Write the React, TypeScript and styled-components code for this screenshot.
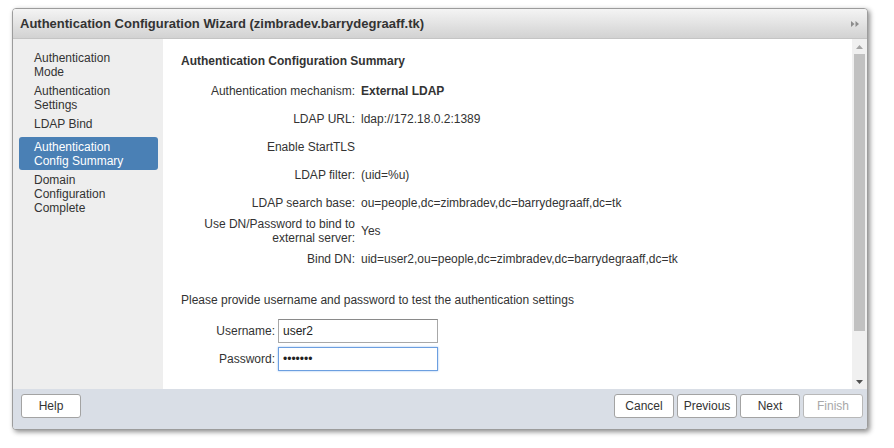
import React from 'react';
import styled, { createGlobalStyle } from 'styled-components';

const GlobalStyle = createGlobalStyle`
  html, body {
    margin: 0;
    padding: 0;
    background: #ffffff;
  }
  body {
    font-family: "Liberation Sans", Arial, sans-serif;
    font-size: 12px;
    color: #333333;
  }
`;

const Page = styled.div`
  padding: 8px 0 0 12px;
  width: 894px;
  height: 448px;
  box-sizing: border-box;
`;

const Dialog = styled.div`
  width: 856px;
  height: 422px;
  box-sizing: border-box;
  border: 1px solid #9c9c9c;
  border-radius: 4px;
  box-shadow: 2px 2px 5px rgba(0, 0, 0, 0.45);
  display: flex;
  flex-direction: column;
  overflow: hidden;
  background: #ffffff;
`;

const TitleBar = styled.div`
  height: 29px;
  flex: none;
  display: flex;
  align-items: center;
  justify-content: space-between;
  padding: 0 8px 0 7px;
  background: linear-gradient(#f4f4f4, #d2d2d2);
  border-bottom: 1px solid #c4c4c4;
`;

const Title = styled.div`
  font-size: 13px;
  font-weight: bold;
  color: #333333;
`;

const Body = styled.div`
  height: 350px;
  flex: none;
  display: flex;
`;

const Nav = styled.div`
  width: 150px;
  flex: none;
  background: #eeeeee;
  padding-top: 9px;
  box-sizing: border-box;
  display: flex;
  flex-direction: column;
`;

// text column is narrow on purpose: the wizard wraps "Authentication Mode"
const NavItem = styled.div<{ $selected?: boolean }>`
  margin: ${(p) => (p.$selected ? '4px' : '0')} 0 0 6px;
  width: 139px;
  box-sizing: border-box;
  padding: 3px 30px 2px 15px;
  line-height: 14px;
  border-radius: 3px;
  background: ${(p) => (p.$selected ? '#4a80b5' : 'transparent')};
  color: ${(p) => (p.$selected ? '#ffffff' : '#333333')};
`;

const Content = styled.div`
  flex: 1;
  padding: 15px 18px 0;
  overflow: hidden;
  box-sizing: border-box;
`;

const Heading = styled.div`
  font-weight: bold;
  line-height: 14px;
  margin-bottom: 9px;
`;

const Summary = styled.div`
  display: grid;
  grid-template-columns: 174px 1fr;
  grid-auto-rows: 28px;
  column-gap: 6px;
  align-items: center;
  line-height: 14px;
`;

const Label = styled.div`
  text-align: right;
`;

const Value = styled.div<{ $bold?: boolean }>`
  font-weight: ${(p) => (p.$bold ? 'bold' : 'normal')};
  white-space: nowrap;
`;

const Note = styled.div`
  margin-top: 20px;
  line-height: 14px;
`;

const LoginGrid = styled.div`
  margin-top: 12px;
  display: grid;
  grid-template-columns: 94px 160px;
  grid-auto-rows: 24px;
  column-gap: 3px;
  row-gap: 4px;
  align-items: center;
`;

const Input = styled.input<{ $focused?: boolean }>`
  width: 160px;
  height: 24px;
  box-sizing: border-box;
  margin: 0;
  padding: 0 4px;
  font-family: "Liberation Sans", Arial, sans-serif;
  font-size: 12px;
  color: #222222;
  background: #ffffff;
  border: 1px solid ${(p) => (p.$focused ? '#6c9fe0' : '#a8a8a8')};
  border-top-color: ${(p) => (p.$focused ? '#6c9fe0' : '#8a8a8a')};
  box-shadow: ${(p) => (p.$focused ? '0 0 2px #9cc0f0' : 'none')};
  outline: none;
`;

const ScrollBar = styled.div`
  width: 15px;
  flex: none;
  background: #f0f0f0;
  display: flex;
  flex-direction: column;
  align-items: center;
`;

const ArrowBox = styled.div`
  height: 15px;
  flex: none;
  display: flex;
  align-items: center;
  justify-content: center;
`;

const Track = styled.div`
  flex: 1;
  width: 100%;
  padding: 0 2px;
  box-sizing: border-box;
`;

const Thumb = styled.div`
  width: 11px;
  height: 277px;
  background: #c1c1c1;
`;

const Footer = styled.div`
  flex: 1;
  background: #d9dee6;
  display: flex;
  align-items: flex-start;
  justify-content: space-between;
  padding: 5px 4px 0 8px;
`;

const ButtonGroup = styled.div`
  display: flex;
  gap: 3px;
`;

const Button = styled.button<{ $disabled?: boolean }>`
  width: 60px;
  height: 24px;
  margin: 0;
  padding: 0;
  background: #ffffff;
  border: 1px solid #a3a3a3;
  border-radius: 3px;
  font-family: "Liberation Sans", Arial, sans-serif;
  font-size: 12px;
  color: ${(p) => (p.$disabled ? '#a8a8a8' : '#333333')};
  border-color: ${(p) => (p.$disabled ? '#b8b8b8' : '#a3a3a3')};
`;

const CollapseIcon = () => (
  <svg width="8" height="6" viewBox="0 0 8 6">
    <polygon points="0,0 3.5,3 0,6" fill="#8c8c8c" />
    <polygon points="4.5,0 8,3 4.5,6" fill="#8c8c8c" />
  </svg>
);

const Arrow = ({ up, color }: { up?: boolean; color: string }) => (
  <svg width="7" height="4" viewBox="0 0 7 4">
    <polygon points={up ? '0,4 3.5,0 7,4' : '0,0 3.5,4 7,0'} fill={color} />
  </svg>
);

const steps = [
  'Authentication Mode',
  'Authentication Settings',
  'LDAP Bind',
  'Authentication Config Summary',
  'Domain Configuration Complete',
];

const summary: { label: string; value: string; bold?: boolean }[] = [
  { label: 'Authentication mechanism:', value: 'External LDAP', bold: true },
  { label: 'LDAP URL:', value: 'ldap://172.18.0.2:1389' },
  { label: 'Enable StartTLS', value: '' },
  { label: 'LDAP filter:', value: '(uid=%u)' },
  { label: 'LDAP search base:', value: 'ou=people,dc=zimbradev,dc=barrydegraaff,dc=tk' },
  { label: 'Use DN/Password to bind to external server:', value: 'Yes' },
  { label: 'Bind DN:', value: 'uid=user2,ou=people,dc=zimbradev,dc=barrydegraaff,dc=tk' },
];

const App: React.FC = () => {
  return (
    <Page>
      <GlobalStyle />
      <Dialog>
        <TitleBar>
          <Title>Authentication Configuration Wizard (zimbradev.barrydegraaff.tk)</Title>
          <CollapseIcon />
        </TitleBar>
        <Body>
          <Nav>
            {steps.map((s, i) => (
              <NavItem key={s} $selected={i === 3}>
                {s}
              </NavItem>
            ))}
          </Nav>
          <Content>
            <Heading>Authentication Configuration Summary</Heading>
            <Summary>
              {summary.map((row) => (
                <React.Fragment key={row.label}>
                  <Label>{row.label}</Label>
                  <Value $bold={row.bold}>{row.value}</Value>
                </React.Fragment>
              ))}
            </Summary>
            <Note>Please provide username and password to test the authentication settings</Note>
            <LoginGrid>
              <Label>Username:</Label>
              <Input type="text" defaultValue="user2" />
              <Label>Password:</Label>
              <Input type="password" defaultValue="secret1" $focused />
            </LoginGrid>
          </Content>
          <ScrollBar>
            <ArrowBox>
              <Arrow up color="#a3a3a3" />
            </ArrowBox>
            <Track>
              <Thumb />
            </Track>
            <ArrowBox>
              <Arrow color="#505050" />
            </ArrowBox>
          </ScrollBar>
        </Body>
        <Footer>
          <Button>Help</Button>
          <ButtonGroup>
            <Button>Cancel</Button>
            <Button>Previous</Button>
            <Button>Next</Button>
            <Button $disabled>Finish</Button>
          </ButtonGroup>
        </Footer>
      </Dialog>
    </Page>
  );
};

export default App;
